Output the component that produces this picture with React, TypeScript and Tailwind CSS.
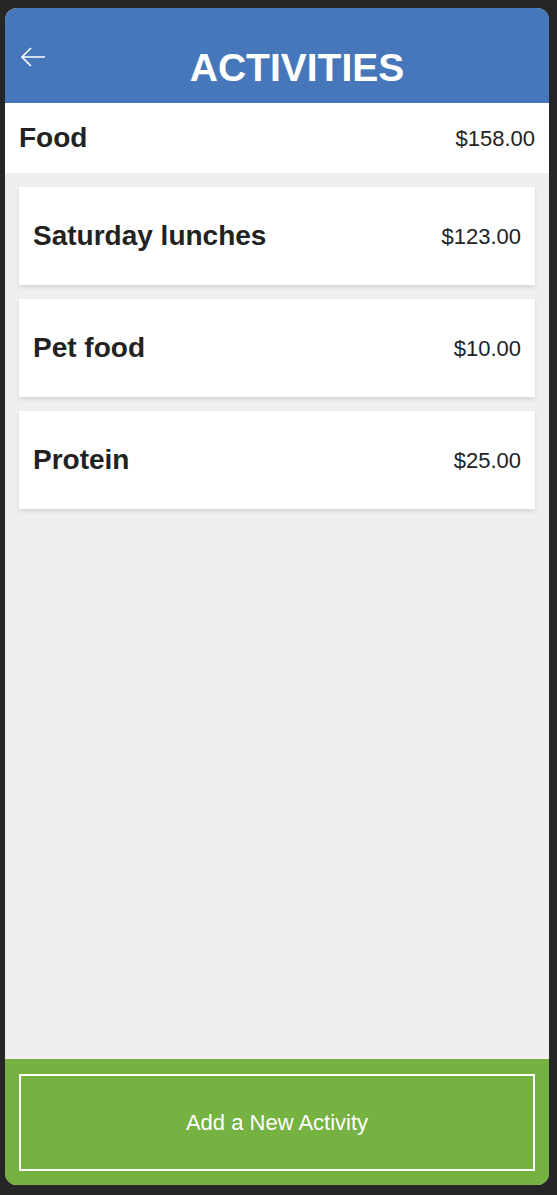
const activities = [
  { name: "Saturday lunches", amount: "$123.00" },
  { name: "Pet food", amount: "$10.00" },
  { name: "Protein", amount: "$25.00" },
];

function BackArrow() {
  return (
    <svg width="24" height="20" viewBox="0 0 24 20" fill="none" stroke="white" strokeWidth="1.6">
      <path d="M1 10 H24" />
      <path d="M10 1 L1 10 L10 19" />
    </svg>
  );
}

export default function App() {
  return (
    <div className="h-[1195px] w-[557px] bg-[#262626] pt-2 pl-[5px] pr-2 pb-[10px] font-['Liberation_Sans',Arial,sans-serif]">
      <div className="flex h-full flex-col overflow-hidden rounded-[12px] bg-[#f0eeef]">
        {/* header */}
        <header className="relative flex h-[95px] shrink-0 items-center justify-center bg-[#4577ba] pl-10">
          <button className="absolute left-4 top-[39px]">
            <BackArrow />
          </button>
          <h1 className="mt-[23px] text-[39px] font-bold leading-none text-white">ACTIVITIES</h1>
        </header>

        <div className="flex h-[70px] shrink-0 items-center justify-between bg-white pl-[14px] pr-[14px]">
          <span className="text-[28px] font-bold text-[#222]">Food</span>
          <span className="text-[22px] text-[#222]">$158.00</span>
        </div>

        <main className="flex flex-1 flex-col gap-[14px] px-[14px] pt-[14px]">
          {activities.map((a) => (
            <div
              key={a.name}
              className="flex h-[98px] items-center justify-between bg-white px-[14px] shadow-[0_2px_4px_rgba(0,0,0,0.12)]"
            >
              <span className="text-[28px] font-bold text-[#222]">{a.name}</span>
              <span className="text-[22px] text-[#222]">{a.amount}</span>
            </div>
          ))}
        </main>

        <footer className="shrink-0 bg-[#76b242] px-[14px] pt-[15px] pb-[14px]">
          <button className="flex h-[97px] w-full items-center justify-center border-2 border-white text-[22px] text-white">
            Add a New Activity
          </button>
        </footer>
      </div>
    </div>
  );
}
